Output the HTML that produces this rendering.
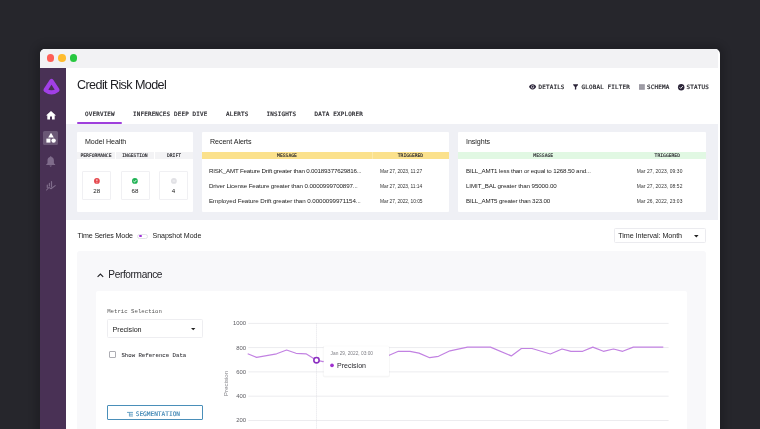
<!DOCTYPE html>
<html lang="en">
<head>
<meta charset="utf-8">
<title>Credit Risk Model</title>
<style>
*{box-sizing:border-box;margin:0;padding:0}
body{will-change:transform}
html,body{width:760px;height:429px;overflow:hidden;background:#26262c;font-family:"Liberation Sans",Arial,sans-serif;color:#1f1f24}
.abs{position:absolute}
svg{overflow:visible}
#win{position:absolute;left:40px;top:49px;width:680px;height:400px;background:#fff;border-radius:5px 5px 0 0;overflow:hidden;box-shadow:0 0 7px 5px rgba(0,0,0,.16)}
#tbar{position:absolute;left:0;top:0;width:678px;height:19px;background:#f2f2f4}
.dot{position:absolute;top:5.4px;width:7.6px;height:7.6px;border-radius:50%}
#side{position:absolute;left:0;top:19px;width:25.7px;height:400px;background:#493155}
#hdr{position:absolute;left:25.7px;top:19px;width:655px;height:56px;background:#fff}
#title{position:absolute;left:37px;top:28.5px;font-size:12.6px;letter-spacing:-.6px;color:#1d1d22;white-space:nowrap}
.mono{font-family:"Liberation Mono","DejaVu Sans Mono",monospace}
.dj{font-family:"DejaVu Sans Mono","Liberation Mono",monospace}
.tab{position:absolute;top:61.8px;font-size:5.9px;font-weight:normal;-webkit-text-stroke:.2px #26262c;letter-spacing:.18px;color:#26262c;white-space:nowrap}
.act{position:absolute;top:34.9px;font-size:5.9px;font-weight:normal;-webkit-text-stroke:.2px #26262c;letter-spacing:.18px;color:#26262c;white-space:nowrap}
#content{position:absolute;left:26px;top:75px;width:652px;height:96px;background:#eff0f5}
.card{position:absolute;background:#fff;border-radius:1px}
.lbl{font-size:7.1px;letter-spacing:-.07px;color:#222;white-space:nowrap}
.ct{position:absolute;left:8px;top:5.8px;font-size:7.1px;letter-spacing:-.05px;color:#222}
.th{position:absolute;font-size:4.7px;font-weight:normal;-webkit-text-stroke:.12px #26262b;letter-spacing:0;color:#26262b;text-align:center;white-space:nowrap}
.row{position:absolute;margin-top:-.7px;font-size:6.2px;color:#222;white-space:nowrap}
.dt{position:absolute;margin-top:-.15px;font-size:4.9px;letter-spacing:-.07px;color:#333;white-space:nowrap}
.hb{position:absolute;top:39.2px;width:29px;height:29px;border:1px solid #f0f0f3;border-radius:1px;background:#fff}
.hb svg{position:absolute;left:10.9px;top:5.5px}
.hb span{position:absolute;left:0;width:100%;top:15.3px;font-size:6.2px;text-align:center;color:#222}
</style>
</head>
<body>
<div id="win">
  <div id="tbar">
    <div class="dot" style="left:6.5px;background:#fe5f57"></div>
    <div class="dot" style="left:18px;background:#febc2e"></div>
    <div class="dot" style="left:29.7px;background:#28c840"></div>
  </div>
  <div id="side">
    <svg class="abs" style="left:2.5px;top:10.4px" width="17" height="17" viewBox="0 0 16 16"><path d="M8 2.8 L2.4 11.3 Q8 15.7 13.6 11.3 Z" fill="none" stroke="#a13fe6" stroke-width="3.9" stroke-linejoin="round"/></svg>
    <svg class="abs" style="left:5.8px;top:43px" width="10" height="9" viewBox="0 0 10 9"><path d="M5 0 L0 4.4 H1.3 V8.6 H4 V5.6 H6 V8.6 H8.7 V4.4 H10 Z" fill="#fff"/></svg>
    <div class="abs" style="left:3px;top:62.9px;width:14.8px;height:14.6px;border-radius:1.5px;background:#6b5876"></div>
    <svg class="abs" style="left:5.6px;top:65.4px" width="10" height="10" viewBox="0 0 10 10"><path d="M5 -0.2 L7.8 4.5 H2.2 Z" fill="#fff"/><rect x="0.4" y="5.6" width="4" height="4" fill="#fff"/><circle cx="7.6" cy="7.6" r="2.2" fill="#fff"/></svg>
    <svg class="abs" style="left:6px;top:88px" width="9.4" height="11" viewBox="0 0 9.4 11"><path d="M4.7 0.2 C5.3 0.2 5.5 0.7 5.5 1.1 C7.2 1.6 7.9 3 7.9 4.6 V7.2 L9.2 8.5 V9 H0.2 V8.5 L1.5 7.2 V4.6 C1.5 3 2.2 1.6 3.9 1.1 C3.9 0.7 4.1 0.2 4.7 0.2 Z M3.6 9.5 H5.8 C5.8 10.2 5.3 10.7 4.7 10.7 C4.1 10.7 3.6 10.2 3.6 9.5 Z" fill="#7f6c8b"/></svg>
    <svg class="abs" style="left:5.8px;top:112.5px" width="10" height="10" viewBox="0 0 10 10"><path d="M0.6 9 L3 6.4 L5 7.8 L9.2 4.6" fill="none" stroke="#7f6c8b" stroke-width="1.1" stroke-linejoin="round" stroke-linecap="round"/><path d="M1.3 4 V6.4 M3.4 2.4 V5 M5.5 0.6 V6" fill="none" stroke="#7f6c8b" stroke-width="1.2" stroke-linecap="round"/></svg>
  </div>
  <div id="hdr"></div>
  <div id="title">Credit Risk Model</div>

  <div class="tab dj" style="left:45px">OVERVIEW</div>
  <div class="tab dj" style="left:93px">INFERENCES DEEP DIVE</div>
  <div class="tab dj" style="left:186px">ALERTS</div>
  <div class="tab dj" style="left:226.5px">INSIGHTS</div>
  <div class="tab dj" style="left:274.6px">DATA EXPLORER</div>
  <div class="abs" style="left:37.2px;top:72.7px;width:45.2px;height:2.4px;border-radius:1.2px;background:#9f40dc;z-index:3"></div>

  <div class="act dj" style="left:498.5px">DETAILS</div>
  <div class="act dj" style="left:541.5px">GLOBAL FILTER</div>
  <div class="act dj" style="left:607px">SCHEMA</div>
  <div class="act dj" style="left:646.5px">STATUS</div>


  <svg class="abs" style="left:489.2px;top:34.6px" width="7.2" height="5.6" viewBox="0 0 14 11"><path d="M7 0.4 C3.4 0.4 1 2.8 0 5.5 C1 8.2 3.4 10.6 7 10.6 C10.6 10.6 13 8.2 14 5.5 C13 2.8 10.6 0.4 7 0.4 Z" fill="#2b2438"/><circle cx="7" cy="5.5" r="3.2" fill="#f4f2f7"/><circle cx="7" cy="5.5" r="2.1" fill="#2b2438"/></svg>
  <svg class="abs" style="left:533.3px;top:34.5px" width="5.2" height="5.8" viewBox="0 0 10 11"><path d="M0.3 0.3 H9.7 V1.6 L6.3 5.6 V10 L3.7 10.8 V5.6 L0.3 1.6 Z" fill="#2b2438"/></svg>
  <svg class="abs" style="left:598.8px;top:34.7px" width="5.8" height="6" viewBox="0 0 10 10"><rect x="0" y="0" width="10" height="10" fill="#a6a4ad"/><path d="M0 2.5 H10 M0 5 H10 M0 7.5 H10" stroke="#8e8c96" stroke-width=".8"/></svg>
  <svg class="abs" style="left:637.8px;top:34.6px" width="6.4" height="6.4" viewBox="0 0 10 10"><circle cx="5" cy="5" r="5" fill="#2b2438"/><path d="M2.5 5.1 L4.3 6.9 L7.6 3.3" stroke="#fff" stroke-width="1.4" fill="none"/></svg>
  <div id="content"></div>

  <!-- Model health -->
  <div class="card" style="left:37px;top:83px;width:116px;height:80.2px">
    <div class="ct">Model Health</div>
    <div class="abs" style="left:0;top:20.3px;width:116px;height:6.6px;background:#f3f3f5"></div><div class="abs" style="left:38.2px;top:20.3px;width:.8px;height:6.6px;background:#fff"></div><div class="abs" style="left:77px;top:20.3px;width:.8px;height:6.6px;background:#fff"></div>
    <div class="th dj" style="left:0;top:21px;width:38px">PERFORMANCE</div>
    <div class="th dj" style="left:39px;top:21px;width:38px">INGESTION</div>
    <div class="th dj" style="left:78px;top:21px;width:38px">DRIFT</div>
    <div class="hb" style="left:5.3px"><svg width="5.8" height="5.8" viewBox="0 0 10 10"><circle cx="5" cy="5" r="5" fill="#e5484d"/><path d="M5 2.2 V5.6 M5 7 V8" stroke="#fff" stroke-width="1.5" fill="none"/></svg><span>28</span></div>
    <div class="hb" style="left:43.5px"><svg width="5.8" height="5.8" viewBox="0 0 10 10"><circle cx="5" cy="5" r="5" fill="#1fb254"/><path d="M2.4 5.2 L4.3 7 L7.6 3.4" stroke="#fff" stroke-width="1.5" fill="none"/></svg><span>68</span></div>
    <div class="hb" style="left:82px"><svg width="5.8" height="5.8" viewBox="0 0 10 10"><circle cx="5" cy="5" r="5" fill="#e1e1e5"/><ellipse cx="5" cy="5" rx="2.6" ry="1.6" fill="#ececef"/></svg><span>4</span></div>
  </div>

  <!-- Recent alerts -->
  <div class="card" style="left:162px;top:83px;width:247px;height:80.2px">
    <div class="ct">Recent Alerts</div>
    <div class="abs" style="left:0;top:20.1px;width:247px;height:7.3px;background:#fbe18c"></div><div class="abs" style="left:170px;top:20.1px;width:.7px;height:7.3px;background:#fce9a8"></div>
    <div class="th dj" style="left:0;top:21.2px;width:170px">MESSAGE</div>
    <div class="th dj" style="left:170px;top:21.2px;width:77px">TRIGGERED</div>
    <div class="row" style="left:7px;top:35.7px;letter-spacing:-.18px">RISK_AMT Feature Drift greater than 0.00189377629816...</div>
    <div class="row" style="left:7px;top:51px;letter-spacing:-.107px">Driver License Feature greater than 0.0000999700897...</div>
    <div class="row" style="left:7px;top:65.7px;letter-spacing:-.06px">Employed Feature Drift greater than 0.0000099971154...</div>
    <div class="dt" style="left:178px;top:36.7px">Mar 27, 2023, 11:27</div>
    <div class="dt" style="left:178px;top:52px">Mar 27, 2023, 11:14</div>
    <div class="dt" style="left:178px;top:67.2px">Mar 27, 2022, 10:05</div>
  </div>

  <!-- Insights -->
  <div class="card" style="left:418px;top:83px;width:248px;height:80.2px">
    <div class="ct">Insights</div>
    <div class="abs" style="left:0;top:20.1px;width:248px;height:7.3px;background:#e1f8e3"></div>
    <div class="th dj" style="left:0;top:21.2px;width:170.5px">MESSAGE</div>
    <div class="th dj" style="left:171.3px;top:21.2px;width:76px">TRIGGERED</div>
    <div class="row" style="left:8px;top:35.9px;letter-spacing:-.145px">BILL_AMT1 less than or equal to 1268.50 and...</div>
    <div class="row" style="left:8px;top:51px;letter-spacing:-.087px">LIMIT_BAL greater than 95000.00</div>
    <div class="row" style="left:8px;top:65.7px;letter-spacing:-.147px">BILL_AMT5 greater than 323.00</div>
    <div class="dt" style="left:178.8px;top:36.9px;letter-spacing:.1px">Mar 27, 2023, 09:30</div>
    <div class="dt" style="left:178.8px;top:52px;letter-spacing:.1px">Mar 27, 2023, 08:52</div>
    <div class="dt" style="left:178.8px;top:67.2px;letter-spacing:.1px">Mar 26, 2022, 23:03</div>
  </div>

  <!-- mode row -->
  <div class="abs lbl" style="left:37.6px;top:183px;letter-spacing:-.13px">Time Series Mode</div>
  <div class="abs" style="left:97.4px;top:184.5px;width:10.6px;height:5.4px;border-radius:3px;border:.6px solid #e2e2e8;background:#fff"></div>
  <div class="abs" style="left:99.3px;top:186px;width:2.4px;height:2.4px;border-radius:50%;background:#a030d8"></div>
  <div class="abs lbl" style="left:112.5px;top:183px">Snapshot Mode</div>
  <div class="abs" style="left:574.2px;top:179px;width:91.6px;height:15px;border:1px solid #ebebef;border-radius:1.5px;background:#fff"></div>
  <div class="abs lbl" style="left:578.2px;top:182.4px;font-size:7.2px">Time Interval: Month</div>
  <svg class="abs" style="left:654px;top:186.2px" width="4.6" height="2.4" viewBox="0 0 4.6 2.4"><path d="M0 0 H4.6 L2.3 2.4 Z" fill="#222"/></svg>

  <!-- performance panel -->
  <div class="abs" style="left:37.4px;top:202px;width:628.7px;height:220px;border-radius:3px;background:#f8f8fa"></div>
  <svg class="abs" style="left:57.2px;top:223.8px" width="6.8" height="4.4" viewBox="0 0 6.8 4.4"><path d="M0.6 3.8 L3.4 1 L6.2 3.8" fill="none" stroke="#202025" stroke-width="1.1"/></svg>
  <div class="abs" style="left:68.3px;top:220.1px;font-size:10.1px;letter-spacing:-.36px;color:#1d1d22;white-space:nowrap">Performance</div>
  <div class="abs" style="left:55.5px;top:242px;width:591.3px;height:200px;border-radius:2px;background:#fff"></div>

  <div class="abs mono" style="left:67.2px;top:259px;font-size:5.7px;color:#555;white-space:nowrap">Metric Selection</div>
  <div class="abs" style="left:67.2px;top:270.4px;width:95.4px;height:18.6px;border:1px solid #eeeef1;border-radius:1.5px;background:#fff"></div>
  <div class="abs lbl" style="left:72.6px;top:276.3px;font-size:7.2px">Precision</div>
  <svg class="abs" style="left:150.8px;top:279.4px" width="4.4" height="2.2" viewBox="0 0 4.4 2.2"><path d="M0 0 H4.4 L2.2 2.2 Z" fill="#222"/></svg>
  <div class="abs" style="left:69.2px;top:301.6px;width:7px;height:7px;border:.8px solid #adadb3;border-radius:1px;background:#fff"></div>
  <div class="abs mono" style="left:81.4px;top:303px;font-size:5.7px;color:#38383d;-webkit-text-stroke:.08px #38383d;white-space:nowrap">Show Reference Data</div>

  <div class="abs" style="left:66.8px;top:356px;width:96px;height:15px;border:1.2px solid #4a8fb9;border-radius:1px;background:#fff"></div>
  <svg class="abs" style="left:87px;top:362.6px" width="6" height="4.4" viewBox="0 0 6 4.4"><path d="M0 0.4 H6 M2 2.2 H6 M2 4 H6" stroke="#4a8fb9" stroke-width=".8" fill="none"/><path d="M2.4 0.4 V4" stroke="#4a8fb9" stroke-width=".6" fill="none"/></svg>
  <div class="abs dj" style="left:95.7px;top:361px;font-size:6.15px;-webkit-text-stroke:.15px #3f86b4;color:#3f86b4;white-space:nowrap">SEGMENTATION</div>

  <!-- chart -->
  <svg class="abs" style="left:170px;top:255px" width="480" height="130" viewBox="210 304 480 130" font-family="Liberation Sans, Arial, sans-serif">
    <g stroke="#ececef" stroke-width="1" fill="none">
      <path d="M248.3 323.4 H668.6 M248.3 347.6 H668.6 M248.3 371.9 H668.6 M248.3 396.2 H668.6 M248.3 420.5 H668.6"/>
    </g>
    <g font-size="5.9" fill="#5c5c62" text-anchor="end">
      <text x="246" y="325.4">1000</text>
      <text x="246" y="349.6">800</text>
      <text x="246" y="373.8">600</text>
      <text x="246" y="398">400</text>
      <text x="246" y="422.2">200</text>
    </g>
    <text x="0" y="0" font-size="6.2" fill="#808086" text-anchor="middle" transform="translate(227.6 383.5) rotate(-90)">Precision</text>
    <path d="M316.5 323.4 V433" stroke="#dcdce2" stroke-width=".8" stroke-dasharray="1 1" fill="none"/>
    <polyline fill="none" stroke="#c282e2" stroke-width="1.2" stroke-linejoin="round" points="247.7,353.8 256.6,357.4 276.6,353.8 286.6,350 296,353.3 306,353.8 316.5,360.2 323,361.6 340,358 360,357 380,358.5 389.2,355.3 398.4,351.3 410,351.3 419,353.1 429.7,357.7 438.5,356.3 450,350.8 467.5,347.1 490.5,347.1 511.3,355.9 521.4,348.5 532,348.5 550.4,354 562,349 571,351.3 582.7,351.3 592.8,347.1 603.4,351.3 613.5,349 622.7,351.3 633.3,347.1 663.3,347.1"/>
    <circle cx="316.5" cy="360.2" r="2.65" fill="#fff" stroke="#8c30c2" stroke-width="1.6"/>
    <rect x="322.7" y="345.8" width="67.2" height="31.6" fill="#000" opacity=".035" rx="2"/>
    <rect x="323.7" y="346.3" width="65.3" height="29.4" fill="#fff" rx="1"/>
    <text x="330.6" y="354.7" font-size="4.8" fill="#808087">Jan 29, 2022, 03:00</text>
    <circle cx="332" cy="365.3" r="1.85" fill="#a030d0"/>
    <text x="337" y="367.8" font-size="7.05" fill="#2a2a2f">Precision</text>
  </svg>
</div>
</body>
</html>
